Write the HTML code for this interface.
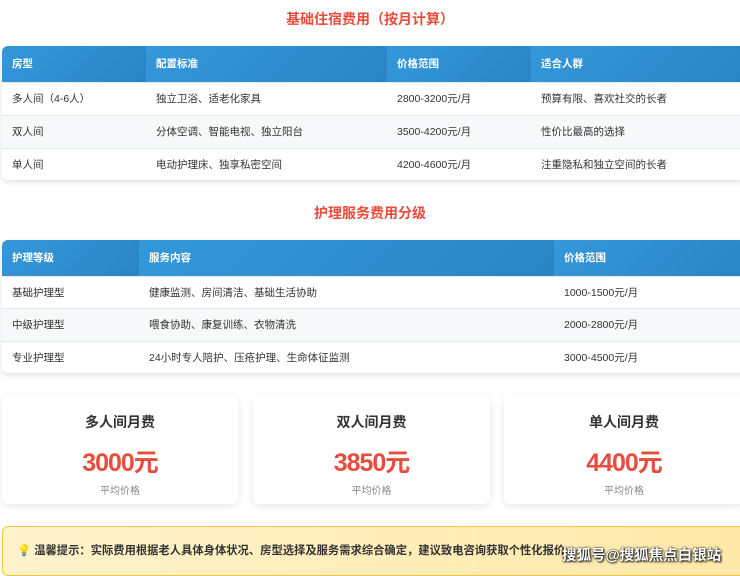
<!DOCTYPE html>
<html><head><meta charset="utf-8"><style>
*{margin:0;padding:0;box-sizing:border-box}
body{width:740px;height:571px;overflow:hidden;background:#fff;font-family:"Liberation Sans","Noto Sans CJK SC",sans-serif;color:#333;position:relative}
.t{position:absolute;left:0;width:740px;text-align:center;color:#e74c3c;font-weight:bold;font-size:14px}
table{position:absolute;left:2px;width:745px;border-collapse:collapse;border-radius:6px;overflow:hidden;box-shadow:0 2px 6px rgba(0,0,0,.12);font-size:10.5px}
th{background:linear-gradient(135deg,#3498db,#2a84c4);color:#fff;text-align:left;font-weight:bold;height:36px;padding-left:10px}
td{padding-left:10px;border-top:1px solid #e4e8ec;background:#fff}
tr:nth-child(odd) td{background:#f6f8fa}
.card{position:absolute;top:395px;height:109px;background:#fff;border-radius:7px;box-shadow:0 2px 8px rgba(0,0,0,.1);text-align:center}
.card h3{margin-top:17px;font-size:14px;color:#333}
.card .p{margin-top:11px;font-size:25px;font-weight:bold;color:#e74c3c;letter-spacing:-1px}
.card .l{margin-top:3px;font-size:10px;color:#888}
.tip{position:absolute;left:2px;top:526px;width:745px;height:50px;background:linear-gradient(90deg,#fff3cd,#ffe9a8);border:1px solid #f5c542;border-radius:6px;font-size:11.3px;font-weight:bold;padding:15px 0 0 14px;color:#333;white-space:nowrap}
.wm{position:absolute;left:562px;top:544px;font-size:14.5px;color:#fff;font-weight:bold;text-shadow:0 0 2px #000,1px 1px 2px #000}
</style></head><body>
<div class="t" style="top:9px">基础住宿费用（按月计算）</div>
<table style="top:46px">
<tr><th style="width:144px">房型</th><th style="width:241px">配置标准</th><th style="width:144px">价格范围</th><th>适合人群</th></tr>
<tr style="height:33px"><td>多人间（4-6人）</td><td>独立卫浴、适老化家具</td><td>2800-3200元/月</td><td>预算有限、喜欢社交的长者</td></tr>
<tr style="height:33px"><td>双人间</td><td>分体空调、智能电视、独立阳台</td><td>3500-4200元/月</td><td>性价比最高的选择</td></tr>
<tr style="height:32px"><td>单人间</td><td>电动护理床、独享私密空间</td><td>4200-4600元/月</td><td>注重隐私和独立空间的长者</td></tr>
</table>
<div class="t" style="top:203px">护理服务费用分级</div>
<table style="top:240px">
<tr><th style="width:137px">护理等级</th><th style="width:415px">服务内容</th><th>价格范围</th></tr>
<tr style="height:32px"><td>基础护理型</td><td>健康监测、房间清洁、基础生活协助</td><td>1000-1500元/月</td></tr>
<tr style="height:33px"><td>中级护理型</td><td>喂食协助、康复训练、衣物清洗</td><td>2000-2800元/月</td></tr>
<tr style="height:32px"><td>专业护理型</td><td>24小时专人陪护、压疮护理、生命体征监测</td><td>3000-4500元/月</td></tr>
</table>
<div class="card" style="left:2px;width:236px"><h3>多人间月费</h3><div class="p">3000元</div><div class="l">平均价格</div></div>
<div class="card" style="left:253px;width:237px"><h3>双人间月费</h3><div class="p">3850元</div><div class="l">平均价格</div></div>
<div class="card" style="left:504px;width:240px"><h3>单人间月费</h3><div class="p">4400元</div><div class="l">平均价格</div></div>
<div class="tip">💡 温馨提示：实际费用根据老人具体身体状况、房型选择及服务需求综合确定，建议致电咨询获取个性化报价。</div>
<div class="wm">搜狐号@搜狐焦点白银站</div>
</body></html>
